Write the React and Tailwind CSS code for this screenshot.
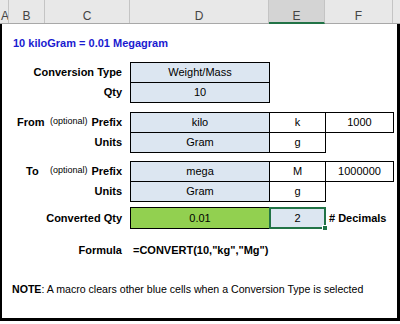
import React from "react";

const cell = "flex items-center justify-center border border-black bg-[#dce6f1] h-[21px]";

function Label({ children }) {
  return (
    <div className="w-[128px] shrink-0 flex items-center justify-end pr-[8px] font-bold">{children}</div>
  );
}

export default function App() {
  return (
    <div className="w-[400px] h-[324px] bg-white overflow-hidden text-[11px] text-black" style={{ fontFamily: '"Liberation Sans", Arial, sans-serif' }}>
      {/* header */}
      <div className="flex h-[24px] bg-[#e8e8e8] border-b border-[#a8a8a8] text-[12px] text-[#444]">
        <div className="w-[9px] border-r border-[#c4c4c4] flex items-center pt-[9px] pl-[1px] overflow-hidden">A</div>
        <div className="w-[36px] border-r border-[#c4c4c4] flex items-center justify-center pt-[9px]">B</div>
        <div className="w-[85px] border-r border-[#c4c4c4] flex items-center justify-center pt-[9px]">C</div>
        <div className="w-[139px] border-r border-[#c4c4c4] flex items-center justify-center pt-[9px]">D</div>
        <div className="w-[56px] border-r border-[#c4c4c4] bg-[#d4d4d4] border-b-2 border-b-[#217346] flex items-center justify-center pt-[9px] -mb-px">E</div>
        <div className="w-[68px] border-r border-[#c4c4c4] flex items-center justify-center pt-[9px]">F</div>
        <div className="flex-1" />
      </div>
      {/* body */}
      <div className="h-[297px] border-l-2 border-r-[3px] border-b-[3px] border-black flex flex-col">
        <div className="h-[38px] flex items-center pl-[11px] font-bold text-[#1a1ad0]">10 kiloGram = 0.01 Megagram</div>

        <div className="flex h-[20px]">
          <Label>Conversion Type</Label>
          <div className={cell + " w-[140px]"}>Weight/Mass</div>
        </div>
        <div className="flex h-[20px]">
          <Label>Qty</Label>
          <div className={cell + " w-[140px]"}>10</div>
        </div>

        <div className="h-[10px]" />

        <div className="flex h-[20px]">
          <div className="w-[128px] shrink-0 flex items-center pr-[8px]">
            <span className="font-bold ml-[15px]">From</span>
            <span className="flex-1" />
            <span className="text-[9px] mr-[4px]">(optional)</span>
            <span className="font-bold">Prefix</span>
          </div>
          <div className={cell + " w-[140px]"}>kilo</div>
          <div className={cell + " w-[57px] -ml-px bg-white"}>k</div>
          <div className={cell + " w-[69px] -ml-px bg-white"}>1000</div>
        </div>
        <div className="flex h-[20px]">
          <Label>Units</Label>
          <div className={cell + " w-[140px]"}>Gram</div>
          <div className={cell + " w-[57px] -ml-px bg-white"}>g</div>
        </div>

        <div className="h-[9px]" />

        <div className="flex h-[20px]">
          <div className="w-[128px] shrink-0 flex items-center pr-[8px]">
            <span className="font-bold ml-[24px]">To</span>
            <span className="flex-1" />
            <span className="text-[9px] mr-[4px]">(optional)</span>
            <span className="font-bold">Prefix</span>
          </div>
          <div className={cell + " w-[140px]"}>mega</div>
          <div className={cell + " w-[57px] -ml-px bg-white"}>M</div>
          <div className={cell + " w-[69px] -ml-px bg-white"}>1000000</div>
        </div>
        <div className="flex h-[20px]">
          <Label>Units</Label>
          <div className={cell + " w-[140px]"}>Gram</div>
          <div className={cell + " w-[57px] -ml-px bg-white"}>g</div>
        </div>

        <div className="h-[6px]" />

        <div className="flex h-[22px]">
          <Label>Converted Qty</Label>
          <div className="w-[140px] h-[22px] border border-black bg-[#92d050] flex items-center justify-center">0.01</div>
          <div className="relative w-[57px] h-[22px] -ml-px border-2 border-[#217346] bg-[#dce6f1] flex items-center justify-center">
            2
            <div className="absolute -right-[4px] -bottom-[4px] w-[6px] h-[6px] bg-[#217346] border border-white" />
          </div>
          <div className="flex items-center pl-[3px] font-bold">#&nbsp;Decimals</div>
        </div>

        <div className="h-[11px]" />

        <div className="flex h-[20px]">
          <Label>Formula</Label>
          <div className="flex items-center pl-[3px] font-bold">=CONVERT(10,"kg","Mg")</div>
        </div>

        <div className="h-[20px]" />

        <div className="flex h-[20px] items-center pl-[10px] text-[10.6px]">
          <span className="font-bold">NOTE</span>
          <span>: A macro clears other blue cells when a Conversion Type is selected</span>
        </div>
      </div>
    </div>
  );
}
